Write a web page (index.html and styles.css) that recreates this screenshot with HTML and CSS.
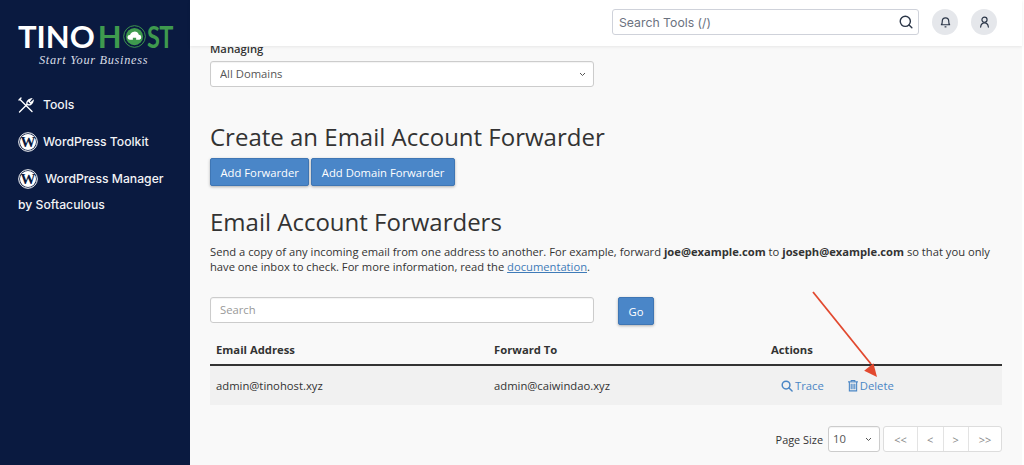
FILE: index.html
```html
<!DOCTYPE html>
<html lang="en">
  <head>
    <meta charset="UTF-8" />
    <meta name="viewport" content="width=device-width, initial-scale=1.0" />
    <link rel="stylesheet" href="styles.css">
    <title>Email Account Forwarders</title>
  </head>
  <body>
    <div class="shell">
      <aside class="sidebar">
        <div class="logo">
          <div class="logo-name">
            TINO<span class="logo-green"><span>H</span><svg class="logo-mark" viewBox="0 0 24 24"><circle cx="12" cy="12" r="11.300" fill="#0a1a40" stroke="#3f9a4e" stroke-width="1"/><circle cx="12" cy="12" r="9" fill="#3f9a4e"/><path d="M7 15.500a2.500 2.500 0 0 1 .3-5 4.800 4.800 0 0 1 9.200-.3 2.700 2.700 0 0 1 .6 5.300h-3.400v-2.200h-3.400v2.200z" fill="#fff"/></svg><span class="logo-end">ST</span></span>
          </div>
          <div class="logo-tag">Start Your Business</div>
        </div>
        <nav class="side-nav">
          <a class="side-link">
            <svg class="tools-icon" viewBox="0 0 16 16" fill="none" stroke="#fff" stroke-width="1.400" stroke-linecap="round"><path d="M1.500 15 9 7.500"/><path d="M9 7.500c-.6-2 .4-4.800 4-5.500l-2 2.500 1.500 1.500 2.500-2c-.5 3.500-3.500 4.500-5.500 3.500z"/><path d="M2 2.500 14 14.500"/><path d="M1 3 3 1"/></svg>
            Tools
          </a>
          <a class="side-link">
            <svg class="wp-icon" viewBox="0 0 20 20"><circle cx="10" cy="10" r="9.300" fill="none" stroke="#fff" stroke-width="1"/><circle cx="10" cy="10" r="8" fill="#fff"/><text x="10" y="15" text-anchor="middle" class="wp-letter">W</text></svg>
            WordPress Toolkit
          </a>
          <a class="side-link side-link-wrap">
            <span class="side-line">
              <svg class="wp-icon" viewBox="0 0 20 20"><circle cx="10" cy="10" r="9.300" fill="none" stroke="#fff" stroke-width="1"/><circle cx="10" cy="10" r="8" fill="#fff"/><text x="10" y="15" text-anchor="middle" class="wp-letter">W</text></svg>
              WordPress Manager
            </span>
            by Softaculous
          </a>
        </nav>
      </aside>

      <div class="main">
        <header class="topbar">
          <div class="tool-search">
            <span>Search Tools (/)</span>
            <svg width="14" height="14" viewBox="0 0 16 16" fill="none" stroke="#2b3648" stroke-width="1.600" stroke-linecap="round"><circle cx="7.200" cy="7.200" r="5.800"/><path d="m11.500 11.500 3.200 3.200"/></svg>
          </div>
          <div class="round-btn">
            <svg width="11" height="12" viewBox="0 0 12 13" fill="none" stroke="#2b3648" stroke-width="1.300" stroke-linejoin="round"><path d="M1.500 9.500c1-1 1-2 1-4a3.500 3.500 0 0 1 7 0c0 2 0 3 1 4z"/><path d="M5 11.800h2"/></svg>
          </div>
          <div class="round-btn">
            <svg width="11" height="12" viewBox="0 0 12 13" fill="none" stroke="#2b3648" stroke-width="1.300" stroke-linecap="round"><circle cx="6" cy="4" r="2.800"/><path d="M1.800 12c.3-3 2-4.500 4.200-4.500s3.900 1.500 4.200 4.500"/></svg>
          </div>
        </header>

        <main class="content">
          <label class="field-label">Managing</label>
          <select class="control select-wide">
            <option>All Domains</option>
          </select>

          <h1 class="title title-create">Create an Email Account Forwarder</h1>
          <div class="btn-row">
            <button class="btn">Add Forwarder</button>
            <button class="btn">Add Domain Forwarder</button>
          </div>

          <h1 class="title title-list">Email Account Forwarders</h1>
          <p class="intro">
            Send a copy of any incoming email from one address to another. For example, forward <b>joe@example.com</b> to <b>joseph@example.com</b> so that you only have one inbox to check. For more information, read the <a class="doc-link">documentation</a>.
          </p>

          <div class="search-row">
            <input class="control search-input" placeholder="Search" />
            <button class="btn btn-go">Go</button>
          </div>

          <div class="table">
            <div class="table-row table-head">
              <div>Email Address</div>
              <div>Forward To</div>
              <div>Actions</div>
            </div>
            <div class="table-row table-body">
              <div>admin@tinohost.xyz</div>
              <div>admin@caiwindao.xyz</div>
              <div class="actions">
                <a class="action">
                  <svg width="12" height="12" viewBox="0 0 13 13" fill="none" stroke="#4a86c5" stroke-width="1.600" stroke-linecap="round"><circle cx="5.500" cy="5.500" r="4.200"/><path d="m8.700 8.700 3.300 3.300"/></svg>
                  Trace
                </a>
                <a class="action">
                  <svg width="10" height="13" viewBox="0 0 11 13" fill="none" stroke="#4a86c5" stroke-width="1.200"><path d="M0 2.500h11"/><path d="M3.500 2.500V1h4v1.500"/><path d="M1.500 2.500v9.900h8V2.500"/><path d="M3.500 4.500V10.500M5.500 4.500V10.500M7.500 4.500V10.500"/></svg>
                  Delete
                </a>
              </div>
            </div>
          </div>

          <div class="pager-row">
            <span class="page-label">Page Size</span>
            <select class="control page-size">
              <option>10</option>
            </select>
            <div class="pager">
              <span class="pager-end">&lt;&lt;</span>
              <span>&lt;</span>
              <span>&gt;</span>
              <span class="pager-end">&gt;&gt;</span>
            </div>
          </div>

          <svg class="arrow" width="80" height="100" viewBox="0 0 80 100" fill="none">
            <path d="M2 1 60 73" stroke="#e2492f" stroke-width="1.800"/>
            <path d="M66 86 53.200 79.800 62.400 72.200z" fill="#e2492f"/>
          </svg>
        </main>
      </div>
    </div>
  </body>
</html>
```

FILE: styles.css
```css
* {
  margin: 0;
  padding: 0;
  box-sizing: border-box;
}
html,
body {
  height: 465px;
  overflow: hidden;
  background: #fff;
}
body {
  font-family: "Open Sans", sans-serif;
  color: #333;
}
.shell {
  display: flex;
  height: 465px;
}

/* sidebar */
.sidebar {
  width: 190px;
  flex-shrink: 0;
  background: #0a1a40;
  color: #fff;
  font-family: Inter, sans-serif;
  padding: 21px 0 0 18px;
}
.logo-name {
  display: flex;
  align-items: center;
  height: 31px;
  font-family: Lato, sans-serif;
  font-size: 31px;
  font-weight: 700;
  line-height: 31px;
}
.logo-green {
  display: flex;
  align-items: center;
  color: #3f9a4e;
  margin-left: 3px;
}
.logo-mark {
  width: 23px;
  height: 23px;
  margin: 0 1px 0 1px;
}
.logo-end {
  letter-spacing: -1px;
  transform: scaleX(0.76);
  transform-origin: left center;
}
.logo-tag {
  font-family: "Liberation Serif", serif;
  font-style: italic;
  font-size: 12.300px;
  letter-spacing: 0.700px;
  margin: 0 0 0 21px;
  line-height: 16px;
  color: #d9dde6;
}
.side-nav {
  margin-top: 27px;
  display: flex;
  flex-direction: column;
  gap: 17px;
}
.side-link {
  display: flex;
  align-items: center;
  gap: 5px;
  font-size: 12.200px;
  font-weight: 500;
  line-height: 20px;
  color: #f2f3f6;
}
.side-link-wrap {
  display: block;
  line-height: 26px;
  margin-top: -3px;
}
.side-line {
  display: flex;
  align-items: center;
  gap: 7px;
}
.tools-icon {
  width: 16px;
  height: 16px;
  margin-right: 4px;
}
.wp-icon {
  width: 20px;
  height: 20px;
}
.wp-letter {
  font-family: "Liberation Serif", serif;
  font-size: 15px;
  font-weight: 700;
  fill: #0a1a40;
}

/* top bar */
.main {
  flex: 1;
  margin-right: 2px;
  background: #f9f9f9;
  display: flex;
  flex-direction: column;
  min-width: 0;
}
.topbar {
  position: relative;
  z-index: 2;
  height: 46px;
  flex-shrink: 0;
  background: #fff;
  box-shadow: 0 1px 3px rgba(0, 0, 0, 0.08);
  display: flex;
  align-items: flex-start;
  padding: 9px 0 0 422px;
  font-family: Inter, sans-serif;
}
.tool-search {
  width: 307px;
  height: 26px;
  border: 1px solid #cfd2da;
  border-radius: 3px;
  display: flex;
  align-items: center;
  justify-content: space-between;
  padding: 0 5px 0 6px;
  font-size: 12.250px;
  color: #6b7280;
  margin-right: 13px;
}
.round-btn {
  width: 26px;
  height: 26px;
  border-radius: 50%;
  background: #e5e7eb;
  display: flex;
  align-items: center;
  justify-content: center;
  margin-right: 13px;
}

/* content */
.content {
  position: relative;
  flex: 1;
  margin-top: -6px;
  padding: 0 20px 0 20px;
  font-size: 11.250px;
}
.field-label {
  display: block;
  font-size: 11.250px;
  font-weight: 600;
  line-height: 17px;
  margin-bottom: 4px;
}
.control {
  height: 26px;
  border: 1px solid #ccc;
  border-radius: 3px;
  background: #fff;
  font-family: "Open Sans", sans-serif;
  font-size: 11.250px;
  color: #555;
  padding: 0 9px 2px;
  box-shadow: inset 0 1px 1px rgba(0, 0, 0, 0.05);
}
select.control {
  appearance: none;
  background: #fff url("data:image/svg+xml,%3Csvg xmlns='http://www.w3.org/2000/svg' width='7' height='5' viewBox='0 0 7 5'%3E%3Cpath d='M1 1l2.500 2.500L6 1' fill='none' stroke='%23555' stroke-width='1'/%3E%3C/svg%3E") no-repeat right 7px center;
}
.select-wide,
.search-input {
  display: block;
  width: 384px;
}
.search-input::placeholder {
  color: #999;
}
.title {
  font-weight: 400;
  font-size: 24px;
  line-height: 32px;
  color: #333;
}
.title-create {
  margin-top: 34px;
}
.btn-row {
  display: flex;
  gap: 2px;
  margin-top: 5px;
}
.btn {
  height: 28px;
  border: 1px solid #3f76b4;
  border-radius: 2px;
  background: #4a86c8;
  color: #fff;
  font-family: "Open Sans", sans-serif;
  font-size: 11.250px;
  padding: 0 9.500px;
  box-shadow: 0 1px 3px rgba(0, 0, 0, 0.3);
}
.title-list {
  margin-top: 20px;
}
.intro {
  margin-top: 6px;
  font-size: 11.200px;
  line-height: 15px;
  color: #333;
}
.doc-link {
  color: #3f7bb8;
  text-decoration: underline;
}
.search-row {
  display: flex;
  align-items: flex-start;
  gap: 24px;
  margin-top: 23px;
}
.btn-go {
  width: 36px;
  padding: 0;
  flex-shrink: 0;
}

/* table */
.table {
  margin-top: 12px;
}
.table-row {
  display: grid;
  grid-template-columns: 278px 277px 1fr;
  padding-left: 6px;
  align-items: center;
}
.table-head {
  height: 29px;
  padding-bottom: 2px;
  border-bottom: 2px solid #333;
  font-weight: 700;
}
.table-body {
  height: 39px;
  background: #f1f1f1;
}
.actions {
  display: flex;
  gap: 24px;
  padding-left: 10px;
}
.action {
  display: flex;
  align-items: center;
  gap: 2px;
  color: #4a86c5;
}

/* paging */
.pager-row {
  display: flex;
  justify-content: flex-end;
  align-items: center;
  margin-top: 21px;
}
.page-label {
  font-size: 10.900px;
  margin-right: 5px;
}
.page-size {
  width: 52px;
  padding: 0 4px 2px;
  margin-right: 3px;
}
.pager {
  display: flex;
  height: 26px;
  width: 119px;
  border: 1px solid #ddd;
  border-radius: 3px;
  background: #fff;
  font-size: 11px;
  color: #888;
}
.pager span {
  flex: 1;
  display: flex;
  align-items: center;
  justify-content: center;
  border-left: 1px solid #e3e3e3;
}
.pager .pager-end {
  flex: 0 0 33px;
}
.pager span:first-child {
  border-left: 0;
}

.arrow {
  position: absolute;
  left: 621px;
  top: 251px;
}
```
